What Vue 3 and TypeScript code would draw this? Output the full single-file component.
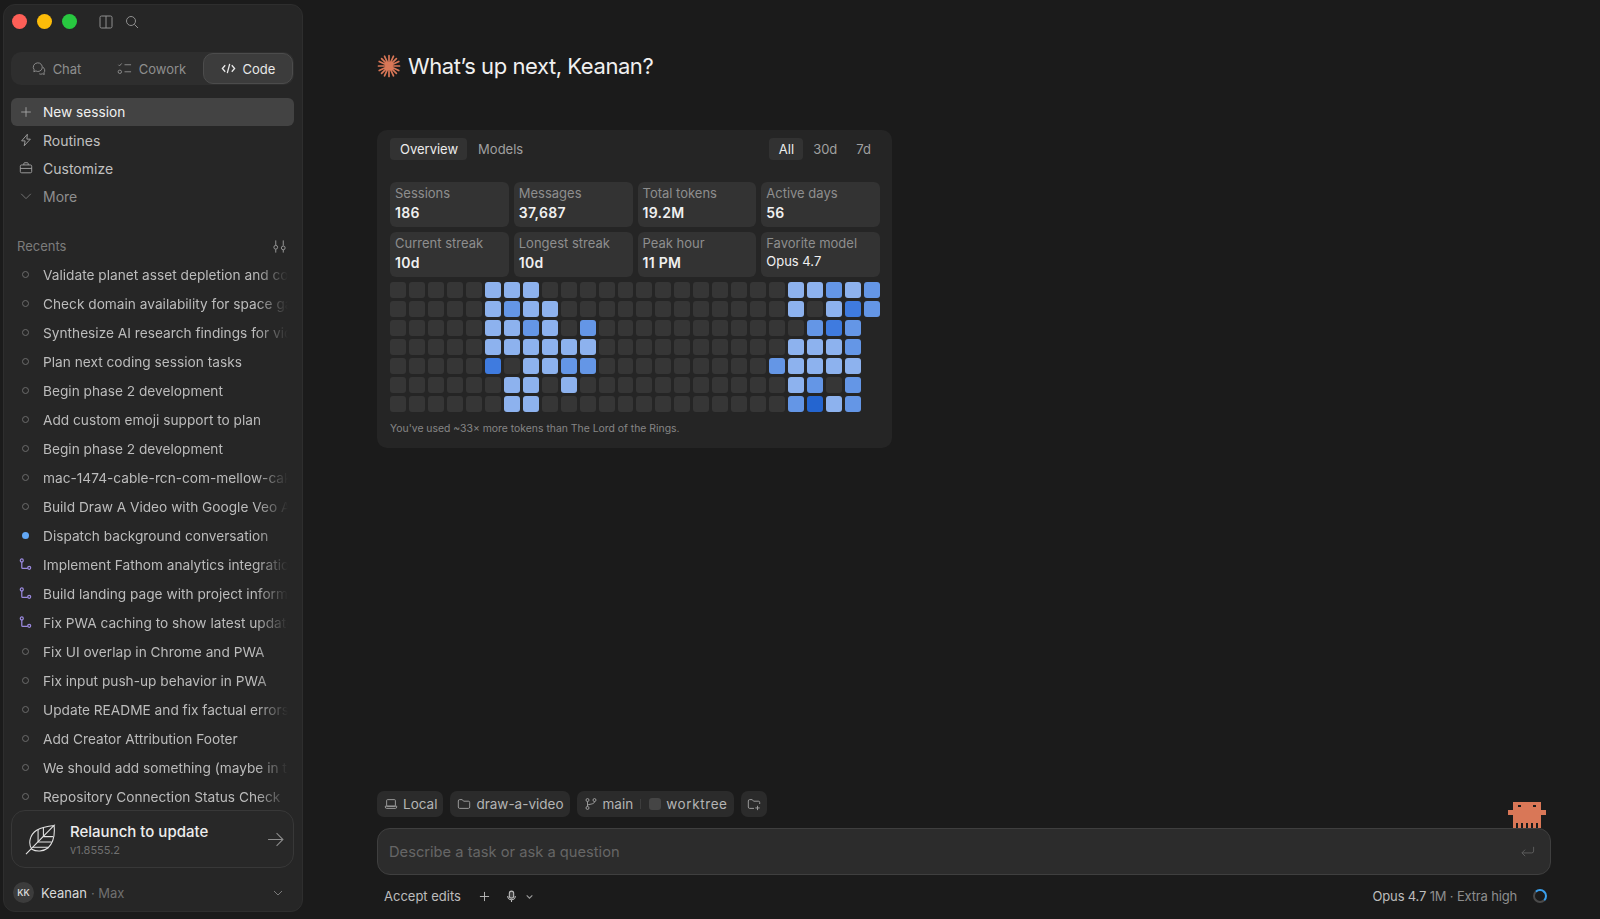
<script setup lang="ts">
type RowKind = 'dot' | 'blue' | 'branch';

const recents: { title: string; kind: RowKind }[] = [
  { title: 'Validate planet asset depletion and completion', kind: 'dot' },
  { title: 'Check domain availability for space game', kind: 'dot' },
  { title: 'Synthesize AI research findings for video', kind: 'dot' },
  { title: 'Plan next coding session tasks', kind: 'dot' },
  { title: 'Begin phase 2 development', kind: 'dot' },
  { title: 'Add custom emoji support to plan', kind: 'dot' },
  { title: 'Begin phase 2 development', kind: 'dot' },
  { title: 'mac-1474-cable-rcn-com-mellow-cake', kind: 'dot' },
  { title: 'Build Draw A Video with Google Veo API', kind: 'dot' },
  { title: 'Dispatch background conversation', kind: 'blue' },
  { title: 'Implement Fathom analytics integration', kind: 'branch' },
  { title: 'Build landing page with project information', kind: 'branch' },
  { title: 'Fix PWA caching to show latest updates', kind: 'branch' },
  { title: 'Fix UI overlap in Chrome and PWA', kind: 'dot' },
  { title: 'Fix input push-up behavior in PWA', kind: 'dot' },
  { title: 'Update README and fix factual errors', kind: 'dot' },
  { title: 'Add Creator Attribution Footer', kind: 'dot' },
  { title: 'We should add something (maybe in the', kind: 'dot' },
  { title: 'Repository Connection Status Check', kind: 'dot' }
];

const stats = [
  { label: 'Sessions', value: '186' },
  { label: 'Messages', value: '37,687' },
  { label: 'Total tokens', value: '19.2M' },
  { label: 'Active days', value: '56' },
  { label: 'Current streak', value: '10d' },
  { label: 'Longest streak', value: '10d' },
  { label: 'Peak hour', value: '11 PM' },
  { label: 'Favorite model', value: 'Opus 4.7', plain: true }
];

// one char per cell: 0 empty, 1-4 blue strength, x nothing drawn
const heat = [
  '00000111000000000000011212',
  '00000121100000000000010132',
  '000001121020000000000 0232x',
  '000001111110000000000 1112x',
  '000003011220000000002 1111x',
  '000000110100000000000 1202x',
  '000000110000000000000 2412x'
];
const cells = heat.join('').replace(/ /g, '').split('');
</script>

<template>
  <div class="app">
    <aside class="sidebar">
      <div class="titlebar">
        <span class="light red"></span>
        <span class="light yellow"></span>
        <span class="light green"></span>
        <svg class="tb-icon panel" viewBox="0 0 14 14" fill="none" stroke="currentColor"><rect x="1" y="1" width="12" height="12" rx="1.5" /><path d="M7 1v12" /></svg>
        <svg class="tb-icon" viewBox="0 0 14 14" fill="none" stroke="currentColor"><circle cx="6" cy="6" r="4.5" /><path d="M9.4 9.4 13 13" /></svg>
      </div>

      <div class="segment">
        <div class="seg-item chat">
          <svg viewBox="0 0 16 16" fill="none" stroke="currentColor"><path d="M7 2a4.6 4.6 0 0 0-3.6 7.4L3 11.4l2.2-.8A4.6 4.6 0 1 0 7 2Z" /><path d="M12.6 6.6a4 4 0 0 1 1.2 6l.4 1.7-2-.6a4 4 0 0 1-3.4 0" /></svg>
          Chat
        </div>
        <div class="seg-item">
          <svg viewBox="0 0 16 16" fill="none" stroke="currentColor"><path d="m1.5 4 1.2 1.2L5 2.6M8 4h7M8 11.5h7" /><circle cx="3" cy="11.5" r="1.8" /></svg>
          Cowork
        </div>
        <div class="seg-item active">
          <svg viewBox="0 0 16 16" fill="none" stroke="currentColor" stroke-width="1.4"><path d="M4.5 4.5 1.5 8l3 3.5M11.5 4.5l3 3.5-3 3.5M9.3 3 6.7 13" /></svg>
          Code
        </div>
      </div>

      <nav class="nav">
        <div class="nav-row current">
          <svg viewBox="0 0 16 16" fill="none" stroke="currentColor"><path d="M8 2.5v11M2.5 8h11" /></svg>
          New session
        </div>
        <div class="nav-row">
          <svg viewBox="0 0 16 16" fill="none" stroke="currentColor"><path d="M9.5 1.5 3 9h4l-1 5.5L13 7H9l.5-5.5Z" stroke-linejoin="round" /></svg>
          Routines
        </div>
        <div class="nav-row">
          <svg viewBox="0 0 16 16" fill="none" stroke="currentColor"><rect x="1.5" y="4.5" width="13" height="9" rx="1.5" /><path d="M5.5 4.5V3a1 1 0 0 1 1-1h3a1 1 0 0 1 1 1v1.5M1.5 8.5h13" /></svg>
          Customize
        </div>
        <div class="nav-row dim">
          <svg viewBox="0 0 16 16" fill="none" stroke="currentColor"><path d="m2.5 5.5 5.5 5.5 5.5-5.5" /></svg>
          More
        </div>
      </nav>

      <div class="recents-head">
        <span>Recents</span>
        <svg viewBox="0 0 16 16" fill="none" stroke="currentColor"><path d="M4 1.5v5M4 11v3.5M12 1.5V7M12 11.5v3" /><circle cx="4" cy="8.8" r="2" /><circle cx="12" cy="9.5" r="2" /></svg>
      </div>

      <div class="recents">
        <div v-for="(item, i) in recents" :key="i" class="recent">
          <span class="recent-mark">
            <span v-if="item.kind === 'dot'" class="ring"></span>
            <span v-else-if="item.kind === 'blue'" class="blue-dot"></span>
            <svg v-else viewBox="0 0 14 14" fill="none" stroke="#9c8be0" stroke-width="1.3"><circle cx="3" cy="2.6" r="1.6" /><circle cx="11" cy="10.6" r="1.6" /><path d="M3 4.2v6c0 .6.4 1 1 1h5.4" /></svg>
          </span>
          <span class="recent-title">{{ item.title }}</span>
        </div>
      </div>

      <div class="update">
        <svg class="leaf" viewBox="0 0 32 32" fill="none" stroke="#e4e4e4" stroke-width="1.1"><path d="M1 31 30 1.500c1 9-1 18-6 23-5 4-12 4.500-17 1.500C3 20 5 11 12 6.500 17 3.500 24 2 30 1.500Z" /><path d="M13.500 18.500V6M19 13V3.800M8 24h16M13.500 18.500h13.800M19 13h10" /></svg>
        <div class="update-text">
          <div class="update-title">Relaunch to update</div>
          <div class="update-ver">v1.8555.2</div>
        </div>
        <svg class="update-arrow" viewBox="0 0 16 16" fill="none" stroke="currentColor"><path d="M1 8h14M9 2l6 6-6 6" /></svg>
      </div>

      <div class="account">
        <span class="avatar">KK</span>
        <span class="name">Keanan</span>
        <span class="plan">· Max</span>
        <svg viewBox="0 0 12 12" fill="none" stroke="currentColor"><path d="m2 4 4 4 4-4" /></svg>
      </div>
    </aside>

    <main class="main">
      <h1 class="greeting">
        <svg viewBox="0 0 24 24" stroke="#d97757" stroke-width="1.7" stroke-linecap="round" fill="none">
          <path d="M12 1.500v21M1.500 12h21M4.600 4.600l14.800 14.800M19.400 4.600 4.600 19.400M7.500 2.200l9 19.600M16.500 2.200l-9 19.600M2.200 7.500l19.600 9M2.200 16.500l19.600-9" />
        </svg>
        What’s up next, Keanan?
      </h1>

      <section class="usage">
        <div class="usage-tabs">
          <span class="tab on">Overview</span>
          <span class="tab models">Models</span>
          <span class="spacer"></span>
          <span class="tab on">All</span>
          <span class="tab">30d</span>
          <span class="tab">7d</span>
        </div>

        <div class="stat-grid">
          <div v-for="s in stats" :key="s.label" class="stat">
            <div class="stat-label">{{ s.label }}</div>
            <div class="stat-value" :class="{ plain: s.plain }">{{ s.value }}</div>
          </div>
        </div>

        <div class="heat">
          <span v-for="(c, i) in cells" :key="i" class="cell" :class="'c' + c"></span>
        </div>

        <p class="note">You've used ~33× more tokens than The Lord of the Rings.</p>
      </section>

      <div class="composer">
        <div class="chips">
          <div class="chip">
            <svg viewBox="0 0 16 16" fill="none" stroke="currentColor"><rect x="3" y="3" width="10" height="7.500" rx="1" /><path d="M1.500 10.500h13v1a1.500 1.500 0 0 1-1.500 1.500H3a1.500 1.500 0 0 1-1.500-1.500Z" /></svg>
            Local
          </div>
          <div class="chip">
            <svg viewBox="0 0 16 16" fill="none" stroke="currentColor"><path d="M1.500 4.500a1.500 1.500 0 0 1 1.500-1.500h3l1.500 1.800H13a1.500 1.500 0 0 1 1.500 1.500v5.200A1.500 1.500 0 0 1 13 13H3a1.500 1.500 0 0 1-1.500-1.500Z" /></svg>
            draw-a-video
          </div>
          <div class="chip">
            <svg viewBox="0 0 16 16" fill="none" stroke="currentColor"><circle cx="4" cy="3.500" r="1.700" /><circle cx="4" cy="12.500" r="1.700" /><circle cx="12" cy="3.500" r="1.700" /><path d="M4 5.200v5.600M12 5.200c0 2.800-4 2.800-8 3.800" /></svg>
            main
            <span class="chip-sep"></span>
            <span class="check"></span>
            <span class="wt">worktree</span>
          </div>
          <div class="chip icon-only">
            <svg viewBox="0 0 16 16" fill="none" stroke="currentColor"><path d="M8 13H3a1.500 1.500 0 0 1-1.500-1.500v-7A1.500 1.500 0 0 1 3 3h3l1.500 1.800H13a1.500 1.500 0 0 1 1.500 1.500V8M12 10v5M9.500 12.500h5" /></svg>
          </div>
        </div>

        <div class="input">
          <span class="placeholder">Describe a task or ask a question</span>
          <svg viewBox="0 0 16 16" fill="none" stroke="currentColor"><path d="M14.500 3v4.500a2 2 0 0 1-2 2H2M5.500 6 2 9.500 5.500 13" /></svg>
          <svg class="mascot" viewBox="0 0 15 10" fill="#d97757" shape-rendering="crispEdges">
            <path d="M2 0h11v3h2v2h-2v5h-1V8h-1v2h-1V8H9v2H8V8H7v2H6V8H5v2H4V8H3v2H2V5H0V3h2V0Z" />
            <rect x="4" y="1" width="1" height="1" fill="#1b1b1b" />
            <rect x="10" y="1" width="1" height="1" fill="#1b1b1b" />
          </svg>
        </div>

        <div class="toolbar">
          <span class="mode">Accept edits</span>
          <svg class="t-plus" viewBox="0 0 12 12" fill="none" stroke="currentColor"><path d="M6 1v10M1 6h10" /></svg>
          <svg class="t-mic" viewBox="0 0 12 12" fill="none" stroke="currentColor"><rect x="4" y="1" width="4" height="6.500" rx="2" fill="currentColor" fill-opacity=".25" /><path d="M2.500 5.500a3.500 3.500 0 0 0 7 0M6 9v2" /></svg>
          <svg class="t-chev" viewBox="0 0 8 8" fill="none" stroke="currentColor"><path d="m1.500 3 2.500 2.500L6.500 3" /></svg>
          <span class="spacer"></span>
          <span class="model">Opus 4.7 <em>1M · Extra high</em></span>
          <span class="spinner"></span>
        </div>
      </div>
    </main>
  </div>
</template>

<style scoped>
.app {
  display: flex;
  height: 919px;
  overflow: hidden;
  background: #1b1b1b;
  font-family: Inter, "Noto Sans", sans-serif;
  color: #d4d4d4;
}

.sidebar {
  width: 300px;
  margin: 4px 0 7px 3px;
  padding: 0 8px 0 7px;
  box-sizing: border-box;
  flex-shrink: 0;
  display: flex;
  flex-direction: column;
  background: #262626;
  border: 1px solid #2e2e2e;
  border-radius: 12px;
}

.titlebar {
  display: flex;
  align-items: center;
  height: 33px;
  padding-left: 1px;
  gap: 10px;
}

.light {
  width: 15px;
  height: 15px;
  border-radius: 50%;
}

.red { background: #fe5f57; }
.yellow { background: #fdbc09; }
.green { background: #28c840; }

.tb-icon {
  width: 14px;
  height: 14px;
  color: #8f8f8f;
}

.panel {
  margin-left: 12px;
  margin-right: 2px;
}

.segment {
  display: flex;
  height: 33px;
  margin-top: 14px;
  background: #2e2e2e;
  border-radius: 10px;
  font-size: 13px;
}

.seg-item {
  flex: 1;
  display: flex;
  align-items: center;
  justify-content: center;
  gap: 7px;
  color: #8e8e8e;
}

.seg-item.chat {
  flex: 0 0 90px;
}

.seg-item svg {
  width: 15px;
  height: 15px;
}

.seg-item.active {
  flex: 0 0 88px;
  margin: 1px;
  color: #e8e8e8;
  background: #3c3c3c;
  border: 1px solid #4c4c4c;
  border-radius: 10px;
}

.nav {
  margin-top: 13px;
}

.nav-row {
  display: flex;
  align-items: center;
  gap: 10px;
  height: 28px;
  padding-left: 8px;
  font-size: 14px;
  color: #c0c0c0;
  border-radius: 6px;
}

.nav-row svg {
  width: 14px;
  height: 14px;
  color: #a8a8a8;
}

.nav-row.current {
  background: #434343;
  color: #f0f0f0;
  font-size: 13.700px;
}

.nav-row.dim {
  color: #8e8e8e;
}

.nav-row.dim svg {
  color: #7a7a7a;
}

.recents-head {
  display: flex;
  justify-content: space-between;
  align-items: center;
  margin-top: 26px;
  padding: 0 7px 0 6px;
  height: 20px;
  font-size: 13px;
  color: #7c7c7c;
}

.recents-head svg {
  width: 15px;
  height: 15px;
  color: #9c9c9c;
}

.recents {
  flex: 1;
  min-height: 0;
  overflow: hidden;
  margin-top: 4px;
}

.recent {
  display: flex;
  align-items: center;
  height: 29px;
  font-size: 13.700px;
  color: #bcbcbc;
}

.recent-mark {
  width: 32px;
  padding-left: 8px;
  box-sizing: border-box;
  flex-shrink: 0;
  display: flex;
  align-items: center;
  justify-content: flex-start;
}

.recent-mark svg {
  width: 13px;
  height: 13px;
}

.ring {
  width: 7px;
  height: 7px;
  margin-left: 3px;
  box-sizing: border-box;
  border: 1.200px solid #6b6b6b;
  border-radius: 50%;
}

.blue-dot {
  width: 7px;
  height: 7px;
  margin-left: 3px;
  background: #62a8f5;
  border-radius: 50%;
}

.recent-title {
  flex: 1;
  min-width: 0;
  white-space: nowrap;
  overflow: hidden;
  margin-right: 6px;
  -webkit-mask-image: linear-gradient(to right, #000 87%, transparent 100%);
  mask-image: linear-gradient(to right, #000 87%, transparent 100%);
}

.update {
  position: relative;
  display: flex;
  align-items: center;
  height: 58px;
  padding: 0 9px 0 13px;
  box-sizing: border-box;
  flex-shrink: 0;
  background: #282828;
  border: 1px solid #383838;
  border-radius: 14px;
}

.leaf {
  width: 31px;
  height: 31px;
  margin-right: 14px;
}

.update-text {
  flex: 1;
}

.update-title {
  font-size: 15px;
  font-weight: 500;
  color: #ededed;
}

.update-ver {
  margin-top: 2px;
  font-size: 11px;
  color: #707070;
}

.update-arrow {
  width: 17px;
  height: 17px;
  color: #8c8c8c;
}

.account {
  display: flex;
  align-items: center;
  height: 43px;
  padding: 6px 10px 0 2px;
  box-sizing: border-box;
  font-size: 13px;
  flex-shrink: 0;
}

.avatar {
  width: 21px;
  height: 21px;
  margin-right: 7px;
  display: flex;
  align-items: center;
  justify-content: center;
  background: #3c3c3c;
  border-radius: 50%;
  font-size: 9px;
  font-weight: 500;
  color: #e0e0e0;
}

.name {
  color: #d8d8d8;
}

.plan {
  flex: 1;
  margin-left: 4px;
  color: #707070;
}

.account svg {
  width: 12px;
  height: 12px;
  color: #7a7a7a;
}

.main {
  flex: 1;
  min-width: 0;
  display: flex;
  flex-direction: column;
  padding: 0 49px 0 74px;
}

.greeting {
  display: flex;
  align-items: center;
  gap: 7px;
  height: 24px;
  margin: 54px 0 0;
  font-size: 22px;
  font-weight: 400;
  letter-spacing: -0.43px;
  color: #f0f0f0;
}

.greeting svg {
  width: 24px;
  height: 24px;
}

.usage {
  width: 515px;
  margin-top: 52px;
  padding: 8px 12px 0 13px;
  height: 318px;
  box-sizing: border-box;
  background: #252525;
  border-radius: 10px;
}

.usage-tabs {
  display: flex;
  align-items: center;
  font-size: 13px;
}

.tab {
  padding: 0 9px 0 10px;
  line-height: 22px;
  color: #a0a0a0;
  border-radius: 4px;
}

.tab.models {
  margin-left: 1px;
}

.tab.on {
  background: #323232;
  color: #ececec;
}

.spacer {
  flex: 1;
}

.stat-grid {
  display: grid;
  grid-template-columns: repeat(4, 1fr);
  gap: 5px;
  margin-top: 22px;
}

.stat {
  height: 45px;
  padding: 3px 5px;
  box-sizing: border-box;
  background: #333333;
  border-radius: 6px;
}

.stat-label {
  font-size: 13px;
  line-height: 16px;
  color: #8e8e8e;
}

.stat-value {
  margin-top: 3px;
  font-size: 14px;
  line-height: 18px;
  font-weight: 600;
  letter-spacing: 0.3px;
  color: #f0f0f0;
}

.stat-value.plain {
  margin-top: 1px;
  font-size: 13px;
  font-weight: 400;
  letter-spacing: 0;
}

.heat {
  display: grid;
  grid-template-columns: repeat(26, 1fr);
  grid-auto-rows: 16px;
  gap: 3px;
  margin-top: 5px;
}

.cell {
  border-radius: 3px;
}

.c0 { background: #363636; }
.c1 { background: #8db2ee; }
.c2 { background: #6496e6; }
.c3 { background: #3f7bdf; }
.c4 { background: #2465d0; }
.cx { background: transparent; }

.note {
  margin: 9px 0 0;
  font-size: 10.400px;
  line-height: 16px;
  color: #858585;
}

.composer {
  margin-top: auto;
  padding-bottom: 12px;
}

.chips {
  display: flex;
  gap: 7px;
}

.chip {
  display: flex;
  align-items: center;
  gap: 7px;
  height: 26px;
  padding: 0 6px 0 7px;
  background: #2b2b2b;
  border-radius: 7px;
  font-size: 13.500px;
  color: #b4b4b4;
}

.chip svg {
  width: 14px;
  height: 14px;
  margin-right: -2px;
  color: #a8a8a8;
}

.chip-sep {
  width: 1px;
  height: 10px;
  background: #3d3d3d;
}

.check {
  width: 12px;
  height: 12px;
  margin-left: 1px;
  background: #454545;
  border-radius: 3px;
}

.wt {
  margin-left: -2px;
  letter-spacing: 0.6px;
}

.icon-only {
  width: 26px;
  padding: 0;
  justify-content: center;
}

.icon-only svg {
  margin-right: 0;
}

.input {
  position: relative;
  display: flex;
  align-items: center;
  justify-content: space-between;
  height: 47px;
  margin-top: 11px;
  padding: 0 15px 0 11px;
  box-sizing: border-box;
  background: #2c2c2c;
  border: 1px solid #3f3f3f;
  border-radius: 13px;
  font-size: 14.700px;
}

.placeholder {
  color: #666666;
}

.input > svg:not(.mascot) {
  width: 15px;
  height: 15px;
  color: #5f5f5f;
}

.mascot {
  position: absolute;
  right: 4px;
  top: -27px;
  width: 38px;
  height: 26px;
}

.toolbar {
  display: flex;
  align-items: center;
  height: 22px;
  margin-top: 10px;
  padding: 0 4px 0 7px;
  font-size: 13px;
  color: #bdbdbd;
}

.t-plus {
  width: 11px;
  height: 11px;
  margin-left: 18px;
  color: #bdbdbd;
}

.t-mic {
  width: 13px;
  height: 13px;
  margin-left: 15px;
}

.t-chev {
  width: 9px;
  height: 9px;
  margin-left: 7px;
  color: #9a9a9a;
}

.model {
  letter-spacing: -0.17px;
}

.model em {
  font-style: normal;
  color: #8e8e8e;
}

.spinner {
  width: 14px;
  height: 14px;
  margin-left: 16px;
  box-sizing: border-box;
  border: 2px solid #4a4a4a;
  border-top-color: #3aa0ee;
  border-right-color: #3aa0ee;
  border-radius: 50%;
}
</style>
